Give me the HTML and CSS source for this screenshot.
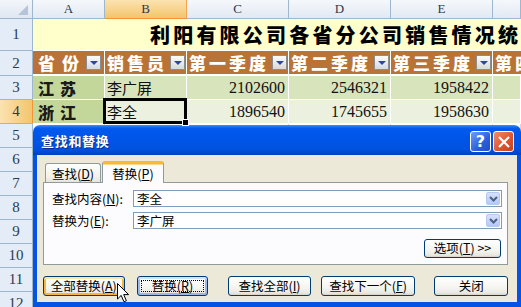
FILE: index.html
```html
<!DOCTYPE html>
<html>
<head>
<meta charset="utf-8">
<link rel="stylesheet" href="styles.css">
</head>
<body>
<div class="sheet">
  <div class="corner"><span class="tri"></span></div>
  <div class="ch">A</div><div class="ch sel">B</div><div class="ch">C</div><div class="ch">D</div><div class="ch">E</div><div class="ch"></div>

  <div class="rh">1</div>
  <div class="title-cell">利阳有限公司各省分公司销售情况统计表</div>

  <div class="rh">2</div>
  <div class="hd hd-a"><span class="wide">省份</span><span class="flt"></span></div>
  <div class="hd"><span>销售员</span><span class="flt"></span></div>
  <div class="hd"><span>第一季度</span><span class="flt"></span></div>
  <div class="hd"><span>第二季度</span><span class="flt"></span></div>
  <div class="hd"><span>第三季度</span><span class="flt"></span></div>
  <div class="hd hd-f"><span>第四季度</span></div>

  <div class="rh">3</div>
  <div class="prov">江苏</div>
  <div class="c r3 name">李广屏</div>
  <div class="c r3 num">2102600</div>
  <div class="c r3 num">2546321</div>
  <div class="c r3 num">1958422</div>
  <div class="c r3"></div>

  <div class="rh sel">4</div>
  <div class="prov">浙江</div>
  <div class="c r4 name active">李全</div>
  <div class="c r4 num">1896540</div>
  <div class="c r4 num">1745655</div>
  <div class="c r4 num">1958630</div>
  <div class="c r4"></div>

  <div class="rh">5</div><div class="e"></div><div class="e"></div><div class="e"></div><div class="e"></div><div class="e"></div><div class="e"></div>
  <div class="rh">6</div><div class="e"></div><div class="e"></div><div class="e"></div><div class="e"></div><div class="e"></div><div class="e"></div>
  <div class="rh">7</div><div class="e"></div><div class="e"></div><div class="e"></div><div class="e"></div><div class="e"></div><div class="e"></div>
  <div class="rh">8</div><div class="e"></div><div class="e"></div><div class="e"></div><div class="e"></div><div class="e"></div><div class="e"></div>
  <div class="rh">9</div><div class="e"></div><div class="e"></div><div class="e"></div><div class="e"></div><div class="e"></div><div class="e"></div>
  <div class="rh">10</div><div class="e"></div><div class="e"></div><div class="e"></div><div class="e"></div><div class="e"></div><div class="e"></div>
  <div class="rh">11</div><div class="e"></div><div class="e"></div><div class="e"></div><div class="e"></div><div class="e"></div><div class="e"></div>
  <div class="rh">12</div><div class="e"></div><div class="e"></div><div class="e"></div><div class="e"></div><div class="e"></div><div class="e"></div>
</div>

<div class="dialog">
  <div class="titlebar">
    <span class="title">查找和替换</span>
    <span class="tbtn help">?</span>
    <span class="tbtn close"><svg width="14" height="14" viewBox="0 0 14 14"><path d="M2 2 L12 12 M12 2 L2 12" stroke="#fff" stroke-width="2.2" fill="none"/></svg></span>
  </div>
  <div class="frame">
    <div class="tabs">
      <div class="tab">查找(<u>D</u>)</div>
      <div class="tab on">替换(<u>P</u>)</div>
    </div>
    <div class="panel">
      <div class="frow">
        <span class="lbl">查找内容(<u>N</u>):</span>
        <div class="combo"><span class="val">李全</span><span class="arr"><svg width="9" height="6" viewBox="0 0 9 6"><path d="M1 1 L4.5 4.5 L8 1" stroke="#4d6185" stroke-width="2" fill="none"/></svg></span></div>
      </div>
      <div class="frow">
        <span class="lbl">替换为(<u>E</u>):</span>
        <div class="combo"><span class="val">李广屏</span><span class="arr"><svg width="9" height="6" viewBox="0 0 9 6"><path d="M1 1 L4.5 4.5 L8 1" stroke="#4d6185" stroke-width="2" fill="none"/></svg></span></div>
      </div>
      <div class="orow"><button class="btn opt">选项(<u>T</u>) &gt;&gt;</button></div>
    </div>
    <div class="brow">
      <button class="btn b1 hover">全部替换(<u>A</u>)</button>
      <button class="btn b2 focus">替换(<u>R</u>)</button>
      <button class="btn b3">查找全部(<u>I</u>)</button>
      <button class="btn b4">查找下一个(<u>F</u>)</button>
      <button class="btn b5">关闭</button>
    </div>
  </div>
</div>

<svg class="cursor" width="13" height="20" viewBox="0 0 13 20"><path d="M0.5 0.5 L0.5 16 L4.2 12.4 L7 18.8 L9.4 17.8 L6.7 11.6 L11.6 11.6 Z" fill="#fff" stroke="#000" stroke-width="1"/></svg>
</body>
</html>
```

FILE: styles.css
```css
* { box-sizing: border-box; }
body {
  margin: 0;
  width: 521px;
  height: 307px;
  overflow: hidden;
  position: relative;
  background: #fff;
  font-family: "Noto Sans CJK SC", sans-serif;
}
.sheet {
  display: grid;
  grid-template-columns: 33px 72px 82px 102px 102px 102px 1fr;
  grid-template-rows: 19px 32px 25px 24px 24px repeat(8, 24px);
  width: 521px;
}
.corner {
  position: relative;
  background: linear-gradient(#f3f6fb, #dfe7f2);
  border-right: 1px solid #9eb6ce;
  border-bottom: 1px solid #9eb6ce;
}
.tri {
  position: absolute;
  right: 4px;
  bottom: 3px;
  width: 10px;
  height: 10px;
  background: #b4c4da;
  clip-path: polygon(100% 0, 100% 100%, 0 100%);
}
.ch {
  background: linear-gradient(#f5f8fc, #e2e9f3);
  border-right: 1px solid #9eb6ce;
  border-bottom: 1px solid #9eb6ce;
  font-family: "Liberation Serif", serif;
  font-size: 13px;
  color: #2b3a4d;
  text-align: center;
  line-height: 18px;
}
.ch.sel {
  background: linear-gradient(#fbe3b0, #f3c56d);
  border-bottom-color: #f29436;
  border-right-color: #f2a54e;
}
.rh {
  background: #e4ecf7;
  border-right: 1px solid #9eb6ce;
  border-bottom: 1px solid #9eb6ce;
  font-family: "Liberation Serif", serif;
  font-size: 15px;
  color: #2b3a4d;
  display: flex;
  align-items: center;
  justify-content: center;
}
.rh.sel {
  background: linear-gradient(90deg, #fbe3b0, #f3c56d);
  border-right-color: #f29436;
}
.title-cell {
  grid-column: 2 / -1;
  background: #ffffcc;
  border-bottom: 1px solid #fff;
  font-size: 20px;
  font-weight: 900;
  letter-spacing: 3.2px;
  white-space: nowrap;
  overflow: hidden;
  padding-left: 117px;
  line-height: 31px;
  color: #000;
}
.hd {
  background: #b97337;
  border-right: 1px solid #fff;
  border-bottom: 2px solid #fff;
  color: #fff;
  font-size: 17px;
  font-weight: 900;
  letter-spacing: 3px;
  display: flex;
  align-items: center;
  justify-content: space-between;
  padding-left: 2px;
  padding-right: 1px;
  white-space: nowrap;
  overflow: hidden;
}
.hd-a { padding-left: 5px; padding-right: 4px; }
.hd .wide { letter-spacing: 7px; }
.hd-f { border-right: none; }
.flt {
  width: 15px;
  height: 15px;
  flex: none;
  border: 1px solid #8d8d8d;
  background: linear-gradient(#fbfbfb, #d9d9d9);
  position: relative;
}
.flt::after {
  content: "";
  position: absolute;
  left: 3px;
  top: 5px;
  border-left: 4px solid transparent;
  border-right: 4px solid transparent;
  border-top: 4px solid #2b4a92;
}
.prov {
  background: #c4d79b;
  border-right: 1px solid #fff;
  border-bottom: 1px solid #fff;
  font-size: 16px;
  font-weight: 900;
  letter-spacing: 6px;
  color: #1a1a1a;
  display: flex;
  align-items: center;
  padding-left: 5px;
}
.c {
  border-right: 1px solid #fff;
  border-bottom: 1px solid #fff;
  display: flex;
  align-items: center;
  color: #111;
}
.r3 { background: #d8e4bc; }
.r4 { background: #ebf1de; }
.name {
  font-size: 15px;
  padding-left: 2px;
}
.num {
  font-family: "Liberation Serif", serif;
  font-size: 16px;
  justify-content: flex-end;
  padding-right: 3px;
}
.active { position: relative; }
.active::after {
  content: "";
  position: absolute;
  left: -2px;
  top: -2px;
  right: -1px;
  bottom: -1px;
  border: 3px solid #000;
}
.active::before {
  content: "";
  position: absolute;
  right: -3px;
  bottom: -3px;
  width: 5px;
  height: 5px;
  background: #000;
  border: 1px solid #fff;
  z-index: 1;
}
.e {
  border-right: 1px solid #d0d7e5;
  border-bottom: 1px solid #d0d7e5;
}

/* dialog */
.dialog {
  position: absolute;
  left: 33px;
  top: 125px;
  width: 488px;
  height: 182px;
  display: flex;
  flex-direction: column;
}
.titlebar {
  height: 30px;
  flex: none;
  border-radius: 7px 7px 0 0;
  background: linear-gradient(#3c8ffb 0, #0a5deb 3px, #0058ee 5px, #0055e8 45%, #0052e0 80%, #0047cf 94%, #003fbd 100%);
  display: flex;
  align-items: center;
  padding: 0 7px 0 8px;
  gap: 2px;
}
.title {
  flex: 1;
  color: #fff;
  font-size: 13px;
  font-weight: 700;
  letter-spacing: 0.7px;
  text-shadow: 1px 1px 0 #0a2a8a;
  padding-top: 1px;
}
.tbtn {
  width: 21px;
  height: 21px;
  border: 1px solid #fff;
  border-radius: 3px;
  display: flex;
  align-items: center;
  justify-content: center;
  margin-top: 3px;
}
.help {
  background: linear-gradient(135deg, #6f9cfa, #2a5fe0 60%, #1f4dc9);
  color: #fff;
  font-family: "DejaVu Sans", sans-serif;
  font-weight: 700;
  font-size: 16px;
}
.close {
  background: linear-gradient(135deg, #f08b6b, #dc542c 60%, #c8401c);
}
.frame {
  flex: 1;
  background: #ece9d8;
  border-style: solid;
  border-color: #0553e4;
  border-width: 0 4px 5px 4px;
  padding: 6px 9px 0 6px;
  display: flex;
  flex-direction: column;
  font-size: 12.5px;
  color: #000;
}
.tabs {
  display: flex;
  align-items: flex-end;
  height: 21px;
  padding-left: 2px;
  position: relative;
  z-index: 1;
}
.tab {
  width: 56px;
  height: 19px;
  border: 1px solid #919b9c;
  border-bottom: none;
  border-radius: 3px 3px 0 0;
  background: linear-gradient(#fefefe, #f2f1ec 70%, #e6e5dd);
  display: flex;
  align-items: center;
  justify-content: center;
  white-space: nowrap;
  font-size: 12.5px;
}
.tab.on {
  width: 62px;
  height: 22px;
  margin-bottom: -1px;
  margin-left: 1px;
  background: #fcfcfe;
  border-top: 3px solid #f7b93a;
  box-shadow: inset 0 1px 0 #ffd98a;
  padding-bottom: 1px;
}
.panel {
  height: 83px;
  border: 1px solid #919b9c;
  background: #fcfcfe;
  padding: 7px 5px 0 8px;
  display: flex;
  flex-direction: column;
  gap: 5px;
}
.frow {
  display: flex;
  align-items: center;
  height: 17px;
}
.lbl {
  width: 81px;
  flex: none;
  white-space: nowrap;
}
.combo {
  flex: 1;
  height: 17px;
  border: 1px solid #7f9db9;
  background: #fff;
  display: flex;
  align-items: center;
  justify-content: space-between;
  padding-left: 3px;
  padding-right: 1px;
}
.val { font-size: 12.5px; }
.arr {
  width: 14px;
  height: 13px;
  border-radius: 2px;
  background: linear-gradient(#d6e1fb, #b5c8f6);
  border: 1px solid #b6c8ef;
  display: flex;
  align-items: center;
  justify-content: center;
}
.orow {
  display: flex;
  justify-content: flex-end;
  margin-top: 5px;
  padding-right: 1px;
}
.btn {
  font-family: "Noto Sans CJK SC", sans-serif;
  font-size: 12.5px;
  color: #000;
  height: 20px;
  padding: 0;
  border: 1px solid #003c74;
  border-radius: 3px;
  background: linear-gradient(#ffffff, #f5f4ef 60%, #e9e7de 90%, #d6d0c5);
  display: flex;
  align-items: center;
  justify-content: center;
  white-space: nowrap;
  position: relative;
  line-height: 1;
}
.opt { width: 77px; height: 19px; }
.brow {
  display: flex;
  margin-top: 11px;
}
.b1 { width: 82px; margin-left: 0; }
.b2 { width: 72px; margin-left: 12px; }
.b3 { width: 83px; margin-left: 20px; }
.b4 { width: 95px; margin-left: 10px; }
.b5 { width: 74px; margin-left: 19px; }
.hover {
  box-shadow: inset 0 2px 0 #ffe6a8, inset 0 0 0 2px #f5b540, inset 0 -2px 0 #e59700;
}
.focus {
  box-shadow: inset 0 2px 0 #cee7ff, inset 0 0 0 2px #98b8ee, inset 0 -2px 0 #6c8fdd;
}
.focus::after {
  content: "";
  position: absolute;
  left: 3px;
  top: 3px;
  right: 3px;
  bottom: 3px;
  border: 1px dotted #000;
}
.cursor {
  position: absolute;
  left: 117px;
  top: 283px;
}
```
